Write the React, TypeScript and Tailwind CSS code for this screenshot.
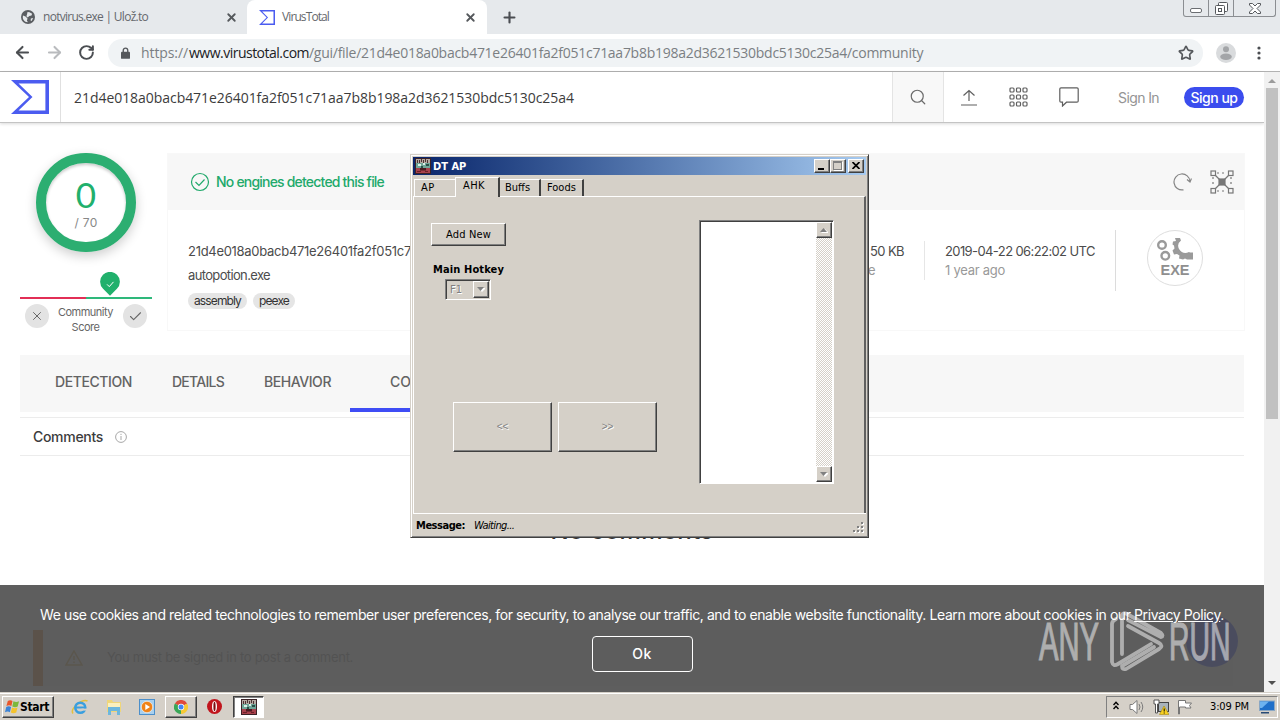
import React from "react";
import { Star, RotateCw, ArrowLeft, ArrowRight, Search, X, Plus, Check } from "lucide-react";

const HASH = "21d4e018a0bacb471e26401fa2f051c71aa7b8b198a2d3621530bdc5130c25a4";

const winFont = "font-['DejaVu_Sans_Condensed','Liberation_Sans',sans-serif] text-[11px] leading-[14px]";
const raised =
  "border border-t-white border-l-white border-r-[#404040] border-b-[#404040] shadow-[inset_-1px_-1px_0_#808080] bg-[#d5d0c8]";
const sunken =
  "border border-t-[#808080] border-l-[#808080] border-r-white border-b-white shadow-[inset_1px_1px_0_#404040]";

function Sigma({ className }: { className: string }) {
  return (
    <svg viewBox="0 0 38 34" className={className} preserveAspectRatio="none">
      <path
        fillRule="evenodd"
        fill="#4b5cf0"
        d="M0 0H38V34H0L18 17ZM7.5 3.6L21.5 17L7.5 30.4H34.4V3.6Z"
      />
    </svg>
  );
}

function AppIcon({ className }: { className: string }) {
  return (
    <svg viewBox="0 0 16 16" className={className}>
      <rect width="16" height="16" fill="#3a2226" />
      <rect x="1" y="1" width="14" height="4" fill="#b5aaa2" />
      <path d="M2.500 2v3M4.500 2v3M6.500 1v3M8.500 2v3M10.500 1v3M12.500 2v3" stroke="#4c3232" fill="none" />
      <rect x="1" y="5" width="14" height="5" fill="#6fa698" />
      <path d="M3 6h3v2H3zM8 5h2v2H8z" fill="#dcefe6" />
      <path d="M6 8h2v2H6zM11 6h3v2h-3z" fill="#2b4f48" />
      <rect x="1" y="10" width="14" height="5" fill="#a8414c" />
      <path d="M5 10h6v2.500H5z" fill="#4a1b20" />
      <path d="M2 13h4v1H2zM10 13h3v1h-3z" fill="#6b2028" />
    </svg>
  );
}

function TabStrip() {
  return (
    <div className="flex h-[34px] shrink-0 bg-[#e6e9ec] font-['Open_Sans',sans-serif] text-[12px] text-[#65686c]">
      <div className="flex w-[247px] items-center pl-[21px] pr-[9px]">
        <svg viewBox="0 0 14 14" className="h-[14px] w-[14px]">
          <circle cx="7" cy="7" r="7" fill="#5b5e62" />
          <path
            d="M2 5.5l2.5 1 2 2-.6 2.2 1 1.4C4 12.400 1.700 10 1.800 7zM6.500 2l2 .3 2.600 1.500-.6 1.700-2.200.4-1.600 1.600-1.300-1.200.6-1.800zM12.200 8l-1.600 3-1-.6.3-2z"
            fill="#e6e9ec"
          />
        </svg>
        <span className="ml-2 flex-1 whitespace-nowrap tracking-[-0.72px]">notvirus.exe | Ulož.to</span>
        <X className="h-[13px] w-[13px] text-[#55585c]" strokeWidth={3.4} />
      </div>
      <div className="flex w-[240px] items-center rounded-t-[8px] bg-white pl-3 pr-[10px]">
        <Sigma className="h-[15px] w-[16px]" />
        <span className="ml-[7px] flex-1 whitespace-nowrap tracking-[-0.9px]">VirusTotal</span>
        <X className="h-[13px] w-[13px] text-[#55585c]" strokeWidth={3.4} />
      </div>
      <div className="flex w-[44px] items-center justify-center">
        <Plus className="h-[17px] w-[17px] text-[#4b4e52]" strokeWidth={3} />
      </div>
      <div className="ml-auto mr-1 flex h-[17px] w-[93px] rounded-b-[3px] border border-t-0 border-[#8b8e92]">
        <div className="flex w-[25px] items-end justify-center border-r border-[#8b8e92] pb-[3px]">
          <div className="h-[5px] w-[12px] rounded-[2px] border border-[#6b6e72] bg-white" />
        </div>
        <div className="flex w-[25px] items-center justify-center border-r border-[#8b8e92]">
          <svg viewBox="0 0 13 13" className="h-[13px] w-[13px]" fill="#fff" stroke="#55585c">
            <rect x="3.500" y=".5" width="9" height="9" rx="1" />
            <rect x=".5" y="3.500" width="9" height="9" rx="1" />
            <rect x="3.500" y="6.500" width="3" height="3" />
          </svg>
        </div>
        <div className="flex flex-1 items-center justify-center">
          <svg viewBox="0 0 12 11" className="h-[11px] w-[12px]" fill="#fff" stroke="#55585c">
            <path d="M.5 .5h3L6 3 8.500.5h3v1.500L8 5.500l3.500 3.500v1.500h-3L6 8l-2.500 2.500h-3V9L4 5.500.5 2z" />
          </svg>
        </div>
      </div>
    </div>
  );
}

function Toolbar() {
  return (
    <div className="flex h-[38px] shrink-0 items-center border-b border-[#b2b2b2] bg-white pl-[13px] pr-[19px]">
      <ArrowLeft className="h-[19px] w-[19px] text-[#4b4e52]" strokeWidth={2.6} />
      <ArrowRight className="ml-[13px] h-[19px] w-[19px] text-[#b9bbbe]" strokeWidth={2.6} />
      <RotateCw className="ml-[14px] h-[17px] w-[17px] text-[#4b4e52]" strokeWidth={2.8} />
      <div className="ml-[13px] flex h-7 w-[1095px] items-center rounded-full bg-[#f0f3f5] pl-[13px] pr-[9px] font-['Open_Sans',sans-serif] text-[14px] text-[#7b7f83]">
        <svg viewBox="0 0 10 13" className="h-[12px] w-[9px]">
          <path d="M2.500 6V3.500a2.500 2.500 0 0 1 5 0V6" fill="none" stroke="#55585c" strokeWidth="1.500" />
          <rect y="5" width="10" height="8" rx="1" fill="#55585c" />
        </svg>
        <div className="-mt-px ml-[11px] flex whitespace-nowrap">
          <span className="w-[48px] tracking-[-0.09px]">https://</span>
          <span className="w-[120px] tracking-[-0.51px] text-[#202124]">www.virustotal.com</span>
          <span className="tracking-[-0.27px]">/gui/file/{HASH}/community</span>
        </div>
        <Star className="ml-auto h-[16px] w-[16px] text-[#55585c]" strokeWidth={2.500} />
      </div>
      <svg viewBox="0 0 20 20" className="ml-[13px] h-[20px] w-[20px]">
        <circle cx="10" cy="10" r="10" fill="#d9dbdd" />
        <circle cx="10" cy="6.200" r="3" fill="#a3a5a8" />
        <ellipse cx="10" cy="13.800" rx="5.800" ry="3.200" fill="#a3a5a8" />
      </svg>
      <svg viewBox="0 0 4 14" className="ml-auto h-[14px] w-[4px]" fill="#4b4e52">
        <circle cx="2" cy="2" r="1.600" />
        <circle cx="2" cy="7" r="1.600" />
        <circle cx="2" cy="12" r="1.600" />
      </svg>
    </div>
  );
}

function SiteHeader() {
  return (
    <div className="flex h-[51px] shrink-0 border-b border-[#c4c4c4] bg-white shadow-[0_1px_3px_rgba(0,0,0,0.15)]">
      <div className="flex w-[61px] items-center border-r border-[#e0e0e0] pl-[11px]">
        <Sigma className="h-[34px] w-[38px]" />
      </div>
      <div className="flex w-[831px] items-center pl-[13px] font-['Open_Sans',sans-serif] text-[14px] tracking-[-0.05px] text-[#3c3c3c]">
        {HASH}
      </div>
      <div className="flex w-[52px] items-center justify-center border-x border-[#e4e4e4] bg-[#f8f8f8]">
        <Search className="h-[18px] w-[18px] text-[#6a6a6a]" strokeWidth={1.600} />
      </div>
      <div className="flex flex-1 items-center pl-[17px] font-['Inter',sans-serif] text-[14px]">
        <svg viewBox="0 0 16 17" className="h-[17px] w-[16px]" fill="none" stroke="#5f5f5f" strokeWidth="1.200">
          <path d="M8 12V1.500M2.500 6.500L8 1.500l5.500 5M0 16h16" />
        </svg>
        <svg viewBox="0 0 19 20" className="ml-[32px] h-[20px] w-[19px]" fill="none" stroke="#5f5f5f" strokeWidth="1.200">
          {[1, 8, 15].map((y) =>
            [1, 7.500, 14].map((x) => <rect key={x + "-" + y} x={x} y={y} width="4" height="4" rx="1" />)
          )}
        </svg>
        <svg viewBox="0 0 20 20" className="ml-[31px] h-[20px] w-[20px]" fill="none" stroke="#5f5f5f" strokeWidth="1.200">
          <path d="M2 .8h16q1.200 0 1.200 1.200v12q0 1.200-1.200 1.200H7.500L3.500 19v-3.800H2Q.8 15.200.8 14V2Q.8.8 2 .8z" />
        </svg>
        <span className="ml-[39px] tracking-[-0.6px] text-[#949494]">Sign In</span>
        <span className="ml-[25px] flex h-[21px] w-[60px] items-center justify-center whitespace-nowrap rounded-full bg-[#3b4dee] font-medium tracking-[-0.5px] text-white">
          Sign up
        </span>
      </div>
    </div>
  );
}

function Score() {
  return (
    <div className="flex w-[132px] flex-col">
      <div className="mx-auto flex h-[100px] w-[100px] flex-col items-center rounded-full border-[10px] border-[#2cae71] pt-[13px] text-center shadow-[0_4px_12px_rgba(0,0,0,0.2),inset_0_2px_3px_rgba(0,0,0,0.2)]">
        <span className="font-['Lato',sans-serif] text-[35px] leading-[36px] text-[#21b06c]">0</span>
        <span className="mt-[4px] text-[12px] leading-[14px] tracking-[0.3px] text-[#888]">/ 70</span>
      </div>
      <svg viewBox="0 0 20 24" className="ml-[80px] mt-[20px] h-[24px] w-[20px]">
        <path d="M10 24L3 17A10 10 0 1 1 17 17z" fill="#21b06c" />
        <path d="M7 12.500l2.300 2.300L13.500 10" fill="none" stroke="#fff" />
      </svg>
      <div className="mt-px flex h-[2px]">
        <div className="w-1/2 bg-[#e22f56]" />
        <div className="w-1/2 bg-[#2eb87b]" />
      </div>
      <div className="mt-[5px] flex items-start pl-[5px] pr-[5px]">
        <div className="flex h-6 w-6 items-center justify-center rounded-full bg-[#e3e3e3]">
          <X className="h-[14px] w-[14px] text-[#666]" strokeWidth={1.700} />
        </div>
        <div className="mt-[1px] flex-1 whitespace-nowrap pr-px text-center text-[11px] leading-[15px] tracking-[-0.51px] text-[#666]">
          Community
          <br />
          Score
        </div>
        <div className="flex h-6 w-6 items-center justify-center rounded-full bg-[#e3e3e3]">
          <Check className="h-[15px] w-[15px] text-[#666]" strokeWidth={1.700} />
        </div>
      </div>
    </div>
  );
}

function Summary() {
  return (
    <div className="ml-[15px] h-[178px] w-[1078px] border border-[#f8f8f8]">
      <div className="flex h-[56px] items-center bg-[#f7f7f7] pl-[22px] pr-[10px]">
        <svg viewBox="0 0 20 20" className="h-[20px] w-[20px]" fill="none" stroke="#21a96b" strokeWidth="1.200">
          <circle cx="10" cy="10" r="8.500" />
          <path d="M5.500 10l3.500 3.500 5.500-6" />
        </svg>
        <span className="-mt-px ml-[6px] whitespace-nowrap text-[14px] font-medium tracking-[-0.8px] text-[#21a96b]">
          No engines detected this file
        </span>
        <svg viewBox="0 0 20 20" className="ml-auto h-[20px] w-[20px]" fill="none" stroke="#858585" strokeWidth="1.200">
          <path d="M11.500 17.800A8 8 0 1 1 18 9.500M15 7.500l3 2.500 1.500-3.500" />
        </svg>
        <svg viewBox="0 0 24 24" className="ml-[18px] h-[24px] w-[24px]" fill="none" stroke="#777" strokeWidth="1.200">
          <path d="M4 4l16 16M20 4L4 20" />
          <path d="M7 3h10M7 21h10M3 7v10M21 7v10" strokeDasharray="2 3" />
          {[1, 18.500].map((y) => [1, 18.500].map((x) => <rect key={x + "-" + y} x={x} y={y} width="4.500" height="4.500" fill="#f7f7f7" />))}
          <rect x="9" y="9" width="6" height="6" fill="#777" />
        </svg>
      </div>
      <div className="flex pl-5 text-[13px] text-[#4c4c4c]">
        <div className="mt-[32px] w-[661px]">
          <div className="w-[223px] overflow-hidden whitespace-nowrap leading-[18px] tracking-[-0.29px]">{HASH.slice(0, 32)}</div>
          <div className="mt-[6px] leading-[18px] tracking-[-0.64px]">autopotion.exe</div>
          <div className="mt-[9px] flex gap-[6px] text-[12px] leading-[16px] text-[#333]">
            <span className="w-[59px] rounded-full bg-[#e5e5e5] text-center tracking-[-0.87px]">assembly</span>
            <span className="w-[42px] rounded-full bg-[#e5e5e5] text-center tracking-[-0.87px]">peexe</span>
          </div>
        </div>
        <div className="mt-[32px] w-[55px] whitespace-nowrap leading-[18px]">
          <div className="pl-[21px] tracking-[-0.6px]">50 KB</div>
          <div className="mt-[1px] pl-[19px] text-[#999]">e</div>
        </div>
        <div className="ml-[20px] mt-[31px] h-[39px] border-l border-[#e6e6e6]" />
        <div className="ml-5 mt-[32px] w-[170px] whitespace-nowrap leading-[18px]">
          <div className="tracking-[-0.6px]">2019-04-22 06:22:02 UTC</div>
          <div className="mt-[1px] tracking-[-0.26px] text-[#999]">1 year ago</div>
        </div>
        <div className="mt-[20px] h-[61px] border-l border-[#dcdcdc]" />
        <div className="ml-[31px] mt-[20px] flex h-[56px] w-[56px] flex-col items-center rounded-full border border-[#dedede]">
          <svg viewBox="0 0 36 24" className="mt-[6px] h-[24px] w-[36px] shrink-0" fill="none" stroke="#9a9a9a" strokeWidth="2.400">
            <circle cx="5" cy="8" r="3.800" />
            <circle cx="8.300" cy="18.800" r="3.800" />
            <path
              d="M18 1h5l1 2.500Q19.500 7 22 12q4 6 10 3l1 .5h3v7h-6l-2-1-2 1-4-1 .5-3-2.500-1.500-3 .5-1.500-4 2-2-.5-3-1.500-1 .5-3 3-.5z"
              fill="#9a9a9a"
              stroke="none"
            />
          </svg>
          <span className="font-['Liberation_Sans',sans-serif] text-[14.500px] font-bold leading-[18px] text-[#8f8f8f]">EXE</span>
        </div>
      </div>
    </div>
  );
}

function SiteBody() {
  return (
    <div className="relative flex min-h-0 flex-1 flex-col overflow-hidden font-['Inter',sans-serif]">
      <div className="mt-[30px] flex h-[182px] shrink-0 pl-5">
        <Score />
        <Summary />
      </div>
      <div className="ml-5 mt-[20px] flex h-[57px] w-[1224px] shrink-0 bg-[#f7f7f7] pl-[35px] text-[14px] font-medium text-[#636363]">
        <span className="mt-[16px] w-[117px] tracking-[-0.41px]">DETECTION</span>
        <span className="mt-[16px] w-[92px] tracking-[-0.74px]">DETAILS</span>
        <span className="mt-[16px] w-[86px] tracking-[-0.44px]">BEHAVIOR</span>
        <div className="w-[60px] overflow-hidden border-b-[4px] border-[#3f4df5] pl-[40px] pt-[16px]">CO</div>
      </div>
      <div className="ml-5 mt-[5px] flex h-[39px] w-[1224px] shrink-0 items-center border-y border-[#ececec] pl-[13px]">
        <span className="text-[14px] font-medium tracking-[-0.3px] text-[#3c3c3c]">Comments</span>
        <svg viewBox="0 0 12 12" className="ml-[12px] h-[12px] w-[12px]" fill="none" stroke="#a8a8a8">
          <circle cx="6" cy="6" r="5.400" />
          <path d="M6 5v4M6 2.800v1.200" />
        </svg>
      </div>
      <div className="mt-[60px] text-center text-[24px] font-medium leading-[30px] tracking-[0.32px] text-[#333]">No comments</div>
      <div className="ml-[33px] mt-[84px] flex h-[56px] w-[1200px] shrink-0 items-center border-l-[10px] border-[#e0883a] bg-[#f0f0f0] pl-[22px]">
        <svg viewBox="0 0 18 16" className="h-[16px] w-[18px]" fill="none" stroke="#d8ac50" strokeWidth="1.500">
          <path d="M9 1l8 14H1zM9 6v4M9 11.500v1.500" />
        </svg>
        <span className="ml-[24px] text-[13px] tracking-[-0.29px] text-[#888]">You must be signed in to post a comment.</span>
      </div>
      <div className="absolute bottom-[25px] right-[26px] h-[52px] w-[52px] rounded-full bg-[#394eff]" />
      <div className="absolute inset-x-0 bottom-0 flex h-[107px] flex-col items-center bg-[#4d4d4d]/90 pt-[20px] text-white">
        <div className="whitespace-nowrap text-[14px] leading-5 tracking-[-0.42px]">
          We use cookies and related technologies to remember user preferences, for security, to analyse our traffic, and to enable
          website functionality. Learn more about cookies in our <span className="underline">Privacy Policy</span>.
        </div>
        <button className="ml-[20px] mt-[11px] h-[36px] w-[101px] rounded-[4px] border border-white pb-[2px] text-[14px] font-medium tracking-[0.5px]">
          Ok
        </button>
      </div>
    </div>
  );
}

function PageScrollbar() {
  return (
    <div className="flex w-4 shrink-0 flex-col items-center bg-[#f1f1f1]">
      <svg viewBox="0 0 8 4" className="mt-[7px] h-[4px] w-[8px]">
        <path d="M0 4l4-4 4 4z" fill="#9b9b9b" />
      </svg>
      <div className="mt-[5px] h-[331px] w-[12px] bg-[#c1c1c1]" />
      <svg viewBox="0 0 8 4" className="mb-[7px] mt-auto h-[4px] w-[8px]">
        <path d="M0 0l4 4 4-4z" fill="#505050" />
      </svg>
    </div>
  );
}

function Triangle({ up }: { up?: boolean }) {
  return (
    <svg viewBox="0 0 8 5" className="h-[5px] w-[8px]">
      <path d={up ? "M1 5l4-4 4 4z" : "M1 1l4 4 4-4z"} fill="#fff" />
      <path d={up ? "M0 4l3.500-4 3.500 4z" : "M0 0l3.500 4 3.500-4z"} fill="#808080" />
    </svg>
  );
}

function DtWindow() {
  return (
    <div
      className={`absolute left-[410px] top-[154px] flex h-[384px] w-[459px] flex-col border border-t-[#d5d0c8] border-l-[#d5d0c8] border-r-[#404040] border-b-[#404040] bg-[#d5d0c8] p-[2px] shadow-[inset_1px_1px_0_#fff,inset_-1px_-1px_0_#808080] text-black ${winFont}`}
    >
      <div className="flex h-[18px] shrink-0 items-center bg-gradient-to-r from-[#0a246a] to-[#a6caf0] pl-[2px] pr-[2px]">
        <AppIcon className="h-4 w-4" />
        <span className="ml-[2px] mt-px font-bold text-white">DT AP</span>
        <div className={`ml-auto flex h-[14px] w-4 items-end pb-[2px] pl-[3px] ${raised}`}>
          <div className="h-[2px] w-[6px] bg-black" />
        </div>
        <div className={`flex h-[14px] w-4 items-center justify-center ${raised}`}>
          <div className="mb-px mr-px h-[9px] w-[9px] border border-t-2 border-[#808080] shadow-[1px_1px_0_#fff]" />
        </div>
        <div className={`ml-[2px] flex h-[14px] w-4 items-center justify-center ${raised}`}>
          <svg viewBox="0 0 8 7" className="mb-px mr-px h-[7px] w-[8px]">
            <path d="M.5 0l7 7M7.500 0l-7 7" stroke="#000" strokeWidth="1.700" />
          </svg>
        </div>
      </div>
      <div className="flex h-[21px] shrink-0 items-end pl-[1px]">
        <div className="h-[17px] w-[41px] border-l border-t border-white pl-[6px] pt-[1px] tracking-[0.5px]">AP</div>
        <div className="z-10 -mb-px h-[20px] w-[45px] border-l border-r-2 border-t border-white border-r-[#404040] bg-[#d5d0c8] pl-[7px] pt-[1px] tracking-[0.4px]">
          AHK
        </div>
        <div className="h-[17px] w-[41px] border-r-2 border-t border-t-white border-r-[#404040] pl-[5px] pt-[1px]">Buffs</div>
        <div className="h-[17px] w-[43px] border-r-2 border-t border-t-white border-r-[#404040] pl-[6px] pt-[1px]">Foods</div>
      </div>
      <div className="flex h-[317px] shrink-0 border-l border-r-2 border-t border-l-white border-r-[#606060] border-t-white">
        <div className="w-[285px] pl-[17px] pt-[26px]">
          <button className={`block h-[23px] w-[75px] tracking-[0.16px] ${raised}`}>Add New</button>
          <div className="ml-[2px] mt-[17px] font-bold tracking-[0.12px]">Main Hotkey</div>
          <div className={`ml-[14px] mt-[2px] flex h-[21px] w-[46px] items-center p-px pl-[4px] text-[#808080] ${sunken}`}>
            <span className="[text-shadow:1px_1px_0_#fff]">F1</span>
            <div className={`ml-auto flex h-full w-[16px] items-center justify-center ${raised}`}>
              <Triangle />
            </div>
          </div>
          <div className="ml-[22px] mt-[102px] flex gap-[6px] font-['Liberation_Sans',sans-serif] text-[10px] text-[#808080]">
            <button className={`h-[50px] w-[99px] [text-shadow:1px_1px_0_#fff] ${raised}`}>&lt;&lt;</button>
            <button className={`h-[50px] w-[99px] [text-shadow:1px_1px_0_#fff] ${raised}`}>&gt;&gt;</button>
          </div>
        </div>
        <div className={`mt-[23px] flex h-[264px] w-[135px] justify-end bg-white p-px ${sunken}`}>
          <div className="flex w-4 flex-col justify-between bg-[#ebe9e5] bg-[repeating-conic-gradient(#d5d0c8_0_25%,#fff_0_50%)] bg-[length:2px_2px]">
            <div className={`flex h-4 w-4 items-center justify-center ${raised}`}>
              <Triangle up />
            </div>
            <div className={`flex h-4 w-4 items-center justify-center ${raised}`}>
              <Triangle />
            </div>
          </div>
        </div>
      </div>
      <div className="flex flex-1 items-center border-t border-white pl-[3px] pt-[2px]">
        <span className="font-bold tracking-[-0.47px]">Message:</span>
        <span className="ml-[9px] italic tracking-[-0.65px]">Waiting...</span>
        <svg viewBox="0 0 12 12" className="ml-auto mr-[2px] mt-[3px] h-[12px] w-[12px]">
          {[[9, 1], [5, 5], [9, 5], [1, 9], [5, 9], [9, 9]].map(([x, y]) => (
            <g key={x + "-" + y}>
              <rect x={x + 1} y={y + 1} width="2" height="2" fill="#fff" />
              <rect x={x} y={y} width="2" height="2" fill="#808080" />
            </g>
          ))}
        </svg>
      </div>
    </div>
  );
}

function Taskbar() {
  return (
    <div className={`flex h-[28px] shrink-0 items-center border-t border-[#d5d0c8] bg-[#d5d0c8] pl-[2px] pr-[2px] shadow-[inset_0_1px_0_#fff] text-black ${winFont}`}>
      <div className={`flex h-[22px] w-[52px] items-center pl-[2px] ${raised}`}>
        <svg viewBox="0 0 16 15" className="h-[15px] w-[15px]">
          <path d="M3 1.500Q5.500 0 8 1.500L6.800 7Q4.500 5.500 1.500 7z" fill="#e8562a" />
          <path d="M9 2Q12 3.500 15 2L13.500 7.500Q11 9 7.800 7.500z" fill="#7cb83c" />
          <path d="M1.300 8Q4 6.500 6.500 8L5.200 13.500Q3 12 0 13.500z" fill="#3b83d6" />
          <path d="M7.500 8.500Q10.500 10 13.300 8.500L12 14Q9 15.500 6.200 14z" fill="#f5c32c" />
        </svg>
        <span className="text-[12px] font-bold tracking-[-0.34px]">Start</span>
      </div>
      <svg viewBox="0 0 18 18" className="ml-[17px] h-[18px] w-[18px]" fill="none">
        <path d="M2 15.500Q-.5 12 6 6.500T16.500 3" stroke="#e3bf3e" strokeWidth="1.500" />
        <circle cx="9.300" cy="9.700" r="5" stroke="#3a9fdf" strokeWidth="2.600" />
        <path d="M5 9.500h9.500" stroke="#3a9fdf" strokeWidth="2" />
        <path d="M10.500 11.600h6" stroke="#d5d0c8" strokeWidth="2" />
      </svg>
      <svg viewBox="0 0 16 16" className="ml-[17px] h-[16px] w-[16px]">
        <path d="M1 1h5l1 2h8v10H1z" fill="#efd67a" />
        <path d="M2 4h12v4H2z" fill="#fbf0bd" />
        <path d="M2 8h12v8h-3v-4H5v4H2z" fill="#6db7dd" />
      </svg>
      <svg viewBox="0 0 16 16" className="ml-[17px] h-[16px] w-[16px]">
        <rect x=".5" y=".5" width="15" height="15" fill="#a8d0ee" stroke="#4c8fca" />
        <circle cx="8" cy="8" r="5.700" fill="#f08318" stroke="#fff" strokeWidth=".6" />
        <path d="M6.300 5l4.700 3-4.700 3z" fill="#fff" />
      </svg>
      <div className={`ml-[10px] flex h-[22px] w-[32px] items-center justify-center ${raised}`}>
        <svg viewBox="0 0 14 14" className="mr-px h-[14px] w-[14px]">
          <path d="M7 7L.9 3.500A7 7 0 0 1 13.100 3.500z" fill="#df4a3c" />
          <path d="M7 7L.9 3.500A7 7 0 0 0 7 14z" fill="#3aa757" />
          <path d="M7 7L13.100 3.500A7 7 0 0 1 7 14z" fill="#f6c934" />
          <circle cx="7" cy="7" r="3.200" fill="#fff" />
          <circle cx="7" cy="7" r="2.500" fill="#4285f4" />
        </svg>
      </div>
      <svg viewBox="0 0 15 15" className="ml-[10px] h-[15px] w-[15px]">
        <circle cx="7.500" cy="7.500" r="7.500" fill="#c1151d" />
        <ellipse cx="7.500" cy="7.500" rx="2.500" ry="5.500" fill="#fff" />
        <ellipse cx="7.500" cy="7.500" rx="1.100" ry="4.700" fill="#7d0b10" />
      </svg>
      <div className="ml-[11px] flex h-[22px] w-[31px] items-center justify-center border border-[#404040] border-b-white border-r-white bg-white shadow-[inset_1px_1px_0_#808080]">
        <AppIcon className="h-4 w-4" />
      </div>
      <div className="ml-auto flex h-[22px] w-[172px] items-center border border-[#808080] border-b-white border-r-white pl-[6px] pr-[2px]">
        <svg viewBox="0 0 6 9" className="mb-[2px] h-[9px] w-[6px]" fill="none" stroke="#000" strokeWidth="1.400">
          <path d="M.5 4L3 1.200 5.500 4M.5 8L3 5.200 5.500 8" />
        </svg>
        <svg viewBox="0 0 16 16" className="ml-[10px] h-[16px] w-[16px]" fill="none" stroke="#7b7b7b">
          <path d="M1 5.500h2.500L8 1.500v13l-4.500-4H1z" fill="#fff" />
          <path d="M10 5q2 3 0 6M12 3q3.500 5 0 10" />
        </svg>
        <svg viewBox="0 0 16 16" className="ml-[8px] h-[16px] w-[16px]">
          <rect x="5.500" y="3.500" width="10" height="9" fill="#a9b3bb" stroke="#444" />
          <path d="M1 1h5v4H4.500v9H2.500V5H1z" fill="#fff" stroke="#555" />
          <path d="M11 7l5 8.500H6.500z" fill="#f8d020" stroke="#a88a10" strokeWidth=".6" />
          <path d="M11.200 9.500v3M11.200 13.500v1" stroke="#000" />
        </svg>
        <svg viewBox="0 0 16 16" className="ml-[8px] h-[16px] w-[16px]" fill="#fff" stroke="#777">
          <path d="M1.500 15V1.500h7V4h6L12.500 6.500 14 9H8.500V8h-6V15z" />
        </svg>
        <span className="ml-[17px] whitespace-nowrap tracking-[-0.13px]">3:09 PM</span>
        <svg viewBox="0 0 16 14" className="ml-auto h-[14px] w-[16px]">
          <rect x=".5" y="1" width="15" height="9.500" fill="#1f6fc9" stroke="#8aa7c4" />
          <path d="M1 1.500h9L3 8 1 8z" fill="#6db2ef" />
          <path d="M2 12h8v1.500H2z" fill="#274a75" />
        </svg>
      </div>
    </div>
  );
}

function Watermark() {
  return (
    <svg viewBox="0 0 200 66" className="absolute left-[1036px] top-[608px] h-[66px] w-[200px]" opacity="0.5">
      <g fill="#fff" stroke="#fff" strokeWidth="1.200" fontFamily="'Liberation Sans', sans-serif" fontSize="54">
        <text transform="translate(3 52) scale(.56 1)" textLength="107" lengthAdjust="spacingAndGlyphs">
          ANY
        </text>
        <text transform="translate(133 52) scale(.56 1)" textLength="110" lengthAdjust="spacingAndGlyphs">
          RUN
        </text>
      </g>
      <g fill="none" stroke="#fff" strokeWidth="3.800" strokeLinejoin="round" strokeLinecap="round">
        <path d="M86 46V7q1-3 5-1l34 19q3 3 0 4L92 12" />
        <path d="M80 11q-4 2-4 5v38q1 5 6 2l33-20" />
        <path d="M92 18l31 17q5 3 0 6L90 61q-4 1-4-3l32-19" />
      </g>
    </svg>
  );
}

export default function App() {
  return (
    <div className="relative flex h-[720px] w-[1280px] flex-col overflow-hidden bg-white">
      <TabStrip />
      <Toolbar />
      <div className="flex min-h-0 flex-1">
        <div className="flex w-[1264px] flex-col">
          <SiteHeader />
          <SiteBody />
        </div>
        <PageScrollbar />
      </div>
      <Taskbar />
      <DtWindow />
      <Watermark />
    </div>
  );
}
